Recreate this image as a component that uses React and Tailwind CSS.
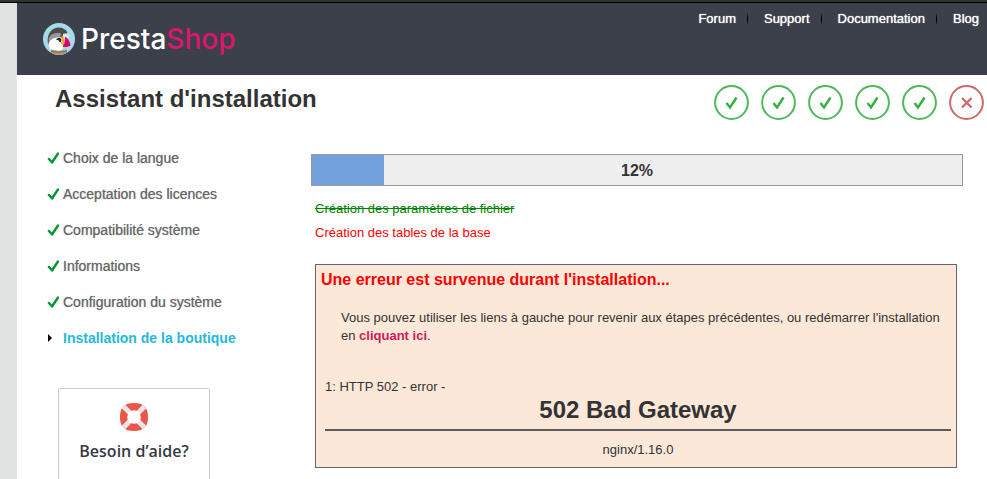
const links = ['Forum', 'Support', 'Documentation', 'Blog']

const steps = [
  'Choix de la langue',
  'Acceptation des licences',
  'Compatibilité système',
  'Informations',
  'Configuration du système',
  'Installation de la boutique',
]

const CURRENT_STEP = 5

const Puffin = () => (
  <svg viewBox="0 0 32 32" className="w-8 h-8 shrink-0">
    <clipPath id="puffin">
      <circle cx="16" cy="16" r="16" />
    </clipPath>
    <g clipPath="url(#puffin)">
      <rect width="32" height="32" fill="#a4dbe8" />
      <path d="M5 21C3 11 9 4.500 15.500 4.500C20 4.500 23 6.500 24.500 9.500L20 14L8 24Z" fill="#4d4d4f" />
      <path d="M5.500 16C7 11.500 12 9 18 10.500L17 15L6 19Z" fill="#96989a" />
      <path d="M5.500 20C8 15.500 12 14 18.500 14.500L20.500 24L18 28H9C6.500 26 5.500 23 5.500 20Z" fill="#fff" />
      <path d="M20 11C22.500 9.500 25.500 11 26 14L24.500 17L20 14Z" fill="#e8e8e8" />
      <path d="M13 16.500C14.500 14.500 17.500 14.500 18.500 16.500L18 19C17 19.500 16 19 16 17.500Z" fill="#222" />
      <path d="M18.500 12.500C21.500 13.500 22.500 18 20.500 22.500L18 20.500C19.500 18 19.500 15 18.500 12.500Z" fill="#f9a51a" />
      <path d="M22 13.500C25 15 27 18.500 27.500 22.500C25 24 22 24.500 19.500 23.500C22 20.500 22.500 17 22 13.500Z" fill="#df0067" />
      <path d="M8 26.500C13 28 19 28 24 26.500V32H8Z" fill="#b09a7c" />
      <path d="M8 28C13 29.500 19 29.500 24 28" fill="none" stroke="#786450" />
    </g>
  </svg>
)

const Tick = () => (
  <svg viewBox="0 0 12 14" className="w-3 h-3.5 shrink-0">
    <path d="M2 8L5 11.500L11 2.500" fill="none" stroke="#009630" strokeWidth="2.400" strokeLinecap="round" strokeLinejoin="round" />
  </svg>
)

const Status = ({ ok }) => (
  <svg viewBox="0 0 35 35" className="w-[35px] h-[35px]" fill="none" strokeWidth="2">
    <circle cx="17.500" cy="17.500" r="16.400" stroke={ok ? '#4fb85b' : '#d06a69'} />
    {
      ok ?
        <path d="M12.500 18L16 22.500L22.500 12.500" stroke="#32b040" strokeWidth="2.400" /> :
        <path d="M13 13L22.500 22.500M22.500 13L13 22.500" stroke="#d06a69" strokeWidth="2.400" />
    }
  </svg>
)

const Lifebuoy = () => (
  <svg viewBox="0 0 28 28" className="w-7 h-7">
    <clipPath id="buoy">
      <path d="M14 0C19 0 22.500 1 24.500 3.500C27 5.500 28 9 28 14C28 19 27 22.500 24.500 24.500C22.500 27 19 28 14 28C9 28 5.500 27 3.500 24.500C1 22.500 0 19 0 14C0 9 1 5.500 3.500 3.500C5.500 1 9 0 14 0Z" />
    </clipPath>
    <g clipPath="url(#buoy)">
      <rect width="28" height="28" fill="#e8574a" />
      <path d="M0 0L28 28M28 0L0 28" stroke="#e6e6e6" strokeWidth="5" />
    </g>
    <circle cx="14" cy="14" r="6.800" fill="#fff" />
  </svg>
)

const Header = () => (
  <header className="h-[72px] flex justify-between bg-[#3b404a] pl-[26px] pr-2">
    <a href="#" className="flex items-center gap-1.5">
      <Puffin />
      <span className="font-['Inter',sans-serif] text-[28px] leading-8 font-medium text-white">
        Presta<span className="text-[#df146e]">Shop</span>
      </span>
    </a>
    <nav className="flex items-start pt-[7px] text-[13px] leading-[18px]">
      {links.map((link, i) => (
        <div key={link} className="flex items-center">
          {
            i > 0 &&
            <span className="w-px h-3 ml-[11px] mr-4 bg-linear-to-b from-[#3b404a] via-black to-[#3b404a]" />
          }
          <a href="#" className="text-white [text-shadow:0_0_1px_#fff]">{link}</a>
        </div>
      ))}
    </nav>
  </header>
)

const Sidebar = () => (
  <aside className="w-[264px] shrink-0">
    <ul className="text-sm">
      {steps.map((step, i) => (
        <li key={step} className="h-9 flex items-start gap-1 leading-[18px]">
          <span className="w-3 h-[18px] flex items-center">
            {
              i < CURRENT_STEP ?
                <Tick /> :
                <svg viewBox="0 0 5 8" className="w-[5px] h-2">
                  <path d="M1 0L5 4L1 8Z" />
                </svg>
            }
          </span>
          <a href="#" className={i === CURRENT_STEP ? 'font-bold text-[#25b9d7]' : 'text-[#666] [text-shadow:0_0_1px_#999]'}>
            {step}
          </a>
        </li>
      ))}
    </ul>
    <div className="w-[152px] h-40 ml-[11px] mt-[23px] pt-3.5 flex flex-col items-center gap-2 border border-[#ccc] rounded-xs">
      <Lifebuoy />
      <h3 className="font-['Open_Sans',sans-serif] text-base leading-6 font-semibold text-[#363a41]">
        Besoin d’aide?
      </h3>
    </div>
  </aside>
)

const Progress = () => (
  <div className="h-8 grid border border-[#999] bg-[#eee]">
    <div className="col-start-1 row-start-1 w-1/9 bg-[#73a1dc]" />
    <p className="col-start-1 row-start-1 self-center pt-0.5 text-center text-base leading-5 font-bold">12%</p>
  </div>
)

const ErrorBox = () => (
  <div className="mt-[22px] ml-1 mr-1.5 pb-2 border border-[#666] bg-[#fbe8d8]">
    <h3 className="pl-[5px] pt-[5px] text-base leading-5 font-bold text-[#f00]">
      Une erreur est survenue durant l'installation...
    </h3>
    <p className="mt-[19px] pl-[25px] pr-3">
      Vous pouvez utiliser les liens à gauche pour revenir aux étapes précédentes, ou redémarrer l'installation en{' '}
      <a href="#" className="font-bold text-[#d41958]">cliquant ici</a>.
    </p>
    <div className="mt-[33px] pl-[9px] pr-[5px]">
      <p>1: HTTP 502 - error -</p>
      <h1 className="text-center text-2xl leading-7 font-bold">502 Bad Gateway</h1>
      <hr className="mt-[5px] border-t-2 border-[#5b5b5b]" />
      <p className="mt-2.5 text-center">nginx/1.16.0</p>
    </div>
  </div>
)

export default function App() {
  return (
    <div className="h-screen overflow-hidden flex flex-col bg-[#e1e3e2] font-['Liberation_Sans',Arial,sans-serif] text-[13px] leading-[18px] text-[#333]">
      <div className="h-[3px] shrink-0 bg-[#333] border-b border-black" />
      <div className="flex-1 ml-[17px] bg-white">
        <Header />
        <div className="flex items-start justify-between pl-[38px] pr-[3px] pt-2.5">
          <h1 className="text-2xl leading-7 font-bold">Assistant d'installation</h1>
          <div className="flex gap-3">
            {steps.map((step, i) => <Status key={step} ok={i < CURRENT_STEP} />)}
          </div>
        </div>
        <div className="flex pl-[30px] pr-6 pt-[29px]">
          <Sidebar />
          <main className="flex-1 min-w-0 pt-[5px]">
            <Progress />
            <div className="mt-3.5 ml-1 flex flex-col gap-1.5">
              <p className="text-[#008000] line-through">Création des paramètres de fichier</p>
              <p className="text-[#f00]">Création des tables de la base</p>
            </div>
            <ErrorBox />
          </main>
        </div>
      </div>
    </div>
  )
}
